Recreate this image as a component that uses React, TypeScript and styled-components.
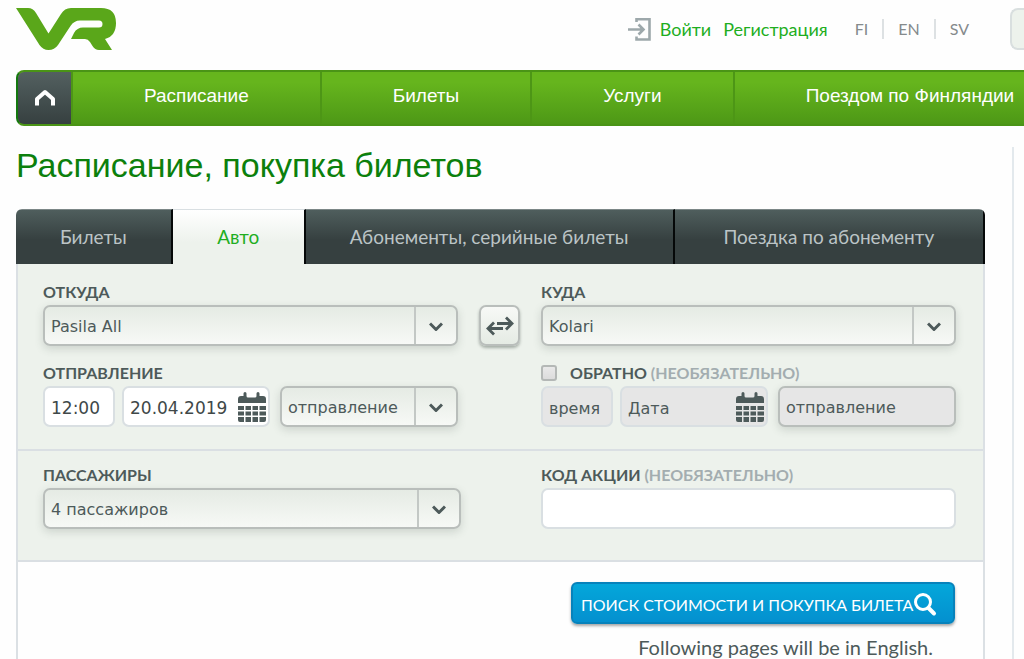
import React from 'react';
import styled, { createGlobalStyle, css } from 'styled-components';

const GlobalStyle = createGlobalStyle`
  *, *::before, *::after { box-sizing: border-box; }
  body {
    margin: 0;
    background: #fefefe;
    color: #4d5a5a;
    font-family: Lato, 'Liberation Sans', sans-serif;
    overflow-x: hidden;
  }
`;

const formFont = css`
  font-family: 'DejaVu Sans', sans-serif;
  font-size: 16px;
  line-height: 20px;
`;

const valueFont = css`
  ${formFont}
  font-size: 17px;
  color: #404848;
  &::placeholder { color: #4d5a5a; font-size: 16px; opacity: 1; }
`;

const Page = styled.div`
  display: flex;
  flex-direction: column;
  min-height: 100vh;
  padding-left: 16px;
  overflow: hidden;
`;

const Header = styled.header`
  display: flex;
  justify-content: space-between;
  align-items: flex-start;
  height: 70px;
  padding-top: 8px;
`;

const LogoLink = styled.a`
  display: block;
  line-height: 0;
`;

const Tools = styled.div`
  display: flex;
  align-items: center;
`;

const AccountLinks = styled.nav`
  display: flex;
  align-items: center;
  gap: 12px;
`;

const AccountLink = styled.a`
  display: flex;
  align-items: center;
  gap: 9px;
  color: #1fae1f;
  font-size: 18px;
  line-height: 24px;
  text-decoration: none;
`;

const Languages = styled.nav`
  display: flex;
  margin: 0 27px 0 13px;
`;

const LanguageLink = styled.a`
  padding: 0 14px;
  color: #858a8c;
  font-size: 16px;
  line-height: 20px;
  text-decoration: none;
  & + & { border-left: 2px solid #dde1e3; }
`;

const SiteSearch = styled.input`
  width: 14px;
  height: 42px;
  border: 2px solid #d9dfdf;
  border-right: 0;
  border-radius: 8px 0 0 8px;
  background: #edf2ec;
`;

const MainNav = styled.nav`
  display: flex;
  height: 56px;
  border: 2px solid #4a9416;
  border-right: 0;
  border-left-color: #14780f;
  border-radius: 8px 0 0 8px;
  background: linear-gradient(#66b51d 20%, #4d9816);
  overflow: hidden;
`;

const HomeLink = styled.a`
  display: flex;
  flex: none;
  align-items: center;
  justify-content: center;
  width: 53px;
  background: linear-gradient(#536060, #364040);
`;

const NavLink = styled.a`
  flex: none;
  padding: 0 71px;
  border-left: 2px solid #4d9616;
  color: #fff;
  font: 19px/48px 'Liberation Sans', sans-serif;
  text-decoration: none;
  white-space: nowrap;
`;

const Body = styled.div`
  display: flex;
  flex: 1;
  gap: 27px;
  padding-top: 21px;
`;

const Main = styled.main`
  display: flex;
  flex: 1;
  flex-direction: column;
  min-width: 0;
`;

const Aside = styled.aside`
  flex: none;
  width: 12px;
  border-left: 2px solid #e3e9ed;
`;

const Title = styled.h1`
  margin: 0 0 26px;
  color: #0c800c;
  font: 34px/36px 'Liberation Sans', sans-serif;
`;

const Tabs = styled.div`
  display: flex;
  height: 55px;
  border-radius: 6px 6px 0 0;
  overflow: hidden;
`;

const Tab = styled.button<{ $weight: number; $active?: boolean }>`
  flex: ${(p) => p.$weight} 1 0;
  min-width: 0;
  padding: 0;
  border: 0;
  border-top: 1px solid ${(p) => (p.$active ? '#d9dfe2' : '#7c8787')};
  border-right: 2px solid #050808;
  background: ${(p) => (p.$active ? 'linear-gradient(#fff, #edf2ec 60%)' : 'linear-gradient(#4f5e5d, #364040 55%)')};
  color: ${(p) => (p.$active ? '#1fae1f' : '#bcc4c6')};
  font: 19px/24px Lato, sans-serif;
  white-space: nowrap;
`;

const Form = styled.form`
  display: flex;
  flex: 1;
  flex-direction: column;
  border: solid #dbe0e4;
  border-width: 0 2px;
`;

const Section = styled.section`
  display: grid;
  grid-template-columns: 1fr 83px 1fr;
  row-gap: 16px;
  padding: 17px 27px 22px 25px;
  border-bottom: 2px solid #dadfe3;
  background: #edf2ec;
`;

const PassengerSection = styled(Section)`
  padding-top: 13px;
  padding-bottom: 31px;
`;

const Field = styled.div<{ $last?: boolean }>`
  display: flex;
  flex-direction: column;
  grid-column: ${(p) => (p.$last ? 3 : 1)};
  min-width: 0;
`;

const LabelRow = styled.div`
  display: flex;
  align-items: center;
  gap: 13px;
  height: 24px;
  padding-bottom: 2px;
`;

const Label = styled.label`
  color: #4d5a5a;
  font-size: 16px;
  font-weight: 700;
  line-height: 20px;
  text-transform: uppercase;
  white-space: nowrap;
`;

const Optional = styled.span`
  color: #a3adb0;
`;

const Checkbox = styled.input`
  appearance: none;
  width: 16px;
  height: 16px;
  margin: 0;
  border: 2px solid #b4b8b6;
  border-radius: 3px;
  background: linear-gradient(#e9e9e9, #dcdcdc);
`;

const FieldRow = styled.div`
  display: grid;
  grid-template-columns: 72px 148px 1fr;
  column-gap: 7px;
  & > :last-child { margin-left: 3px; }
`;

const controlBox = css`
  height: 41px;
  border: 2px solid #d9dfe2;
  border-radius: 7px;
  background: #fff;
  &:disabled { background: #e6e6e6; }
`;

const TextInput = styled.input`
  ${controlBox}
  ${valueFont}
  width: 100%;
  min-width: 0;
  padding: 2px 6px 0;
`;

const DateBox = styled.div<{ $disabled?: boolean }>`
  ${controlBox}
  display: flex;
  align-items: center;
  padding-right: 2px;
  ${(p) => p.$disabled && css`background: #e6e6e6;`}
`;

const DateInput = styled.input`
  ${valueFont}
  flex: 1;
  min-width: 0;
  padding: 2px 0 0 6px;
  border: 0;
  background: transparent;
`;

const SelectBox = styled.div<{ $disabled?: boolean; $wide?: boolean }>`
  display: flex;
  height: 41px;
  width: ${(p) => (p.$wide ? 'calc(100% + 3px)' : 'auto')};
  border: 2px solid #b9bebb;
  border-radius: 7px;
  background: ${(p) => (p.$disabled ? '#e6e6e6' : 'linear-gradient(#e5ebe4, #f7f9f6)')};
  box-shadow: 0 3px 8px rgba(60, 75, 65, 0.18);
`;

const Select = styled.select`
  ${formFont}
  appearance: none;
  flex: 1;
  min-width: 0;
  padding: 2px 0 0 6px;
  border: 0;
  background: transparent;
  color: #4d5a5a;
  opacity: 1;
`;

const SelectArrow = styled.span`
  display: flex;
  flex: none;
  align-items: center;
  justify-content: center;
  width: 42px;
  padding-top: 2px;
  border-left: 2px solid #c3c8c5;
  pointer-events: none;
`;

const SwapButton = styled.button`
  display: flex;
  grid-column: 2;
  align-self: end;
  justify-self: center;
  align-items: center;
  justify-content: center;
  width: 41px;
  height: 41px;
  padding: 0;
  border: 2px solid #b9bebb;
  border-radius: 7px;
  background: linear-gradient(#f7f9f6, #e5ebe4);
  box-shadow: 0 2px 3px rgba(60, 75, 65, 0.4);
`;

const Submit = styled.div`
  display: flex;
  flex-direction: column;
  align-items: flex-end;
  padding: 20px 28px 0;
`;

const SubmitButton = styled.button`
  display: flex;
  align-items: center;
  width: 384px;
  height: 42px;
  padding: 3px 8px 0;
  border: 2px solid #0782bb;
  border-radius: 6px;
  background: linear-gradient(#04a7da, #0490cf);
  box-shadow: 0 2px 3px rgba(0, 0, 0, 0.35);
  color: #fff;
  font: 16px/24px Lato, sans-serif;
  text-transform: uppercase;
  white-space: nowrap;
`;

const Note = styled.p`
  margin: 12px 22px 0 0;
  font-size: 20px;
  line-height: 22px;
`;

const Logo = () => (
  <svg width="100" height="42" viewBox="0 0 100 42" role="img" aria-label="VR">
    <path
      fill="#5aa71a"
      d="M0 0H12Q17 0 20 5L32.500 25.500L45 6Q48.500 0 55 0H85Q100 0 100 15Q100 28 89 31L96 42H83Q79 42 76.500 38L74 34Q72 31 69 31H55L58 25Q61 19.500 67 19.500H83Q86.500 19.500 86.500 16Q86.500 12.500 83 12.500H64Q58 12.500 54.500 18L42 37Q38.500 42 32.500 42Q27 42 23.500 37Z"
    />
  </svg>
);

const LoginIcon = () => (
  <svg width="23" height="24" viewBox="0 0 23 24" fill="none" stroke="#9da8ab" strokeWidth="2.600" aria-hidden="true">
    <path d="M8.500 5V2.300H21.500V22.500H8.500V19.500" />
    <path d="M0 12.500H15M10.500 7.500L15.500 12.500L10.500 17.500" />
  </svg>
);

const HomeIcon = () => (
  <svg width="20" height="18" viewBox="0 0 20 18" fill="none" stroke="#fff" strokeWidth="4" aria-hidden="true">
    <path d="M2 16.500V10L10 3L18 10V16.500" strokeLinejoin="round" />
  </svg>
);

const Chevron = () => (
  <SelectArrow>
    <svg width="14" height="10" viewBox="0 0 14 10" fill="none" stroke="#4d5a5a" strokeWidth="3" aria-hidden="true">
      <path d="M1 1.500L7 7.500L13 1.500" strokeLinejoin="round" />
    </svg>
  </SelectArrow>
);

const SwapIcon = () => (
  <svg width="28" height="20" viewBox="0 0 28 20" fill="none" stroke="#4d5a5a" strokeWidth="2.800" aria-hidden="true">
    <path d="M11 7.500H26M20 1.500L26 7.500L20 13.500M17 12.500H2M8 6.500L2 12.500L8 18.500" />
  </svg>
);

const CalendarIcon = () => (
  <svg width="28" height="30" viewBox="0 0 28 30" fill="#4d5a5a" aria-hidden="true">
    <path d="M0 11V7Q0 4 3 4H5.500V1.500Q5.500 0 7 0Q8.500 0 8.500 1.500V4Q8.500 5.500 10 5.500H17Q18.500 5.500 18.500 4V1.500Q18.500 0 20 0Q21.500 0 21.500 1.500V4H25Q28 4 28 7V11Z" />
    <path d="M0 14H6V18H0ZM7.500 14H13V18H7.500ZM14.500 14H20V18H14.500ZM21.500 14H28V18H21.500ZM0 19.500H6V23.500H0ZM7.500 19.500H13V23.500H7.500ZM14.500 19.500H20V23.500H14.500ZM21.500 19.500H28V23.500H21.500ZM0 25H6V30H2Q0 30 0 28ZM7.500 25H13V30H7.500ZM14.500 25H20V30H14.500ZM21.500 25H28V28Q28 30 26 30H21.500Z" />
  </svg>
);

const SearchGlyph = styled.svg`
  flex: none;
`;

const SearchIcon = () => (
  <SearchGlyph width="24" height="24" viewBox="0 0 24 24" fill="none" stroke="#fff" aria-hidden="true">
    <circle cx="10" cy="9" r="7.500" strokeWidth="3" />
    <path d="M15.500 15L21 20.500" strokeWidth="4" strokeLinecap="round" />
  </SearchGlyph>
);

const navItems = ['Расписание', 'Билеты', 'Услуги', 'Поездом по Финляндии'];

const tabs = [
  { name: 'Билеты', weight: 156 },
  { name: 'Авто', weight: 132, active: true },
  { name: 'Абонементы, серийные билеты', weight: 370 },
  { name: 'Поездка по абонементу', weight: 311 },
];

interface SelectFieldProps {
  id?: string;
  label?: string;
  value: string;
  disabled?: boolean;
  wide?: boolean;
}

const SelectField = ({ id, label, value, disabled, wide }: SelectFieldProps) => (
  <SelectBox $disabled={disabled} $wide={wide}>
    <Select id={id} aria-label={label} disabled={disabled}>
      <option>{value}</option>
    </Select>
    {!disabled && <Chevron />}
  </SelectBox>
);

export default function App() {
  return (
    <>
      <GlobalStyle />
      <Page>
        <Header>
          <LogoLink href="#"><Logo /></LogoLink>
          <Tools>
            <AccountLinks>
              <AccountLink href="#"><LoginIcon />Войти</AccountLink>
              <AccountLink href="#">Регистрация</AccountLink>
            </AccountLinks>
            <Languages>
              {['FI', 'EN', 'SV'].map((l) => <LanguageLink key={l} href="#">{l}</LanguageLink>)}
            </Languages>
            <SiteSearch type="search" aria-label="Поиск" />
          </Tools>
        </Header>
        <MainNav>
          <HomeLink href="#" aria-label="VR"><HomeIcon /></HomeLink>
          {navItems.map((n) => <NavLink key={n} href="#">{n}</NavLink>)}
        </MainNav>
        <Body>
          <Main>
            <Title>Расписание, покупка билетов</Title>
            <Tabs>
              {tabs.map((t) => (
                <Tab key={t.name} type="button" $weight={t.weight} $active={t.active}>{t.name}</Tab>
              ))}
            </Tabs>
            <Form>
              <Section>
                <Field>
                  <LabelRow><Label htmlFor="from">Откуда</Label></LabelRow>
                  <SelectField id="from" value="Pasila All" />
                </Field>
                <SwapButton type="button" aria-label="Откуда / Куда"><SwapIcon /></SwapButton>
                <Field $last>
                  <LabelRow><Label htmlFor="to">Куда</Label></LabelRow>
                  <SelectField id="to" value="Kolari" />
                </Field>
                <Field>
                  <LabelRow><Label htmlFor="time">Отправление</Label></LabelRow>
                  <FieldRow>
                    <TextInput id="time" defaultValue="12:00" />
                    <DateBox>
                      <DateInput aria-label="Дата" defaultValue="20.04.2019" />
                      <CalendarIcon />
                    </DateBox>
                    <SelectField label="Отправление" value="отправление" />
                  </FieldRow>
                </Field>
                <Field $last>
                  <LabelRow>
                    <Checkbox type="checkbox" id="return" />
                    <Label htmlFor="return">Обратно <Optional>(необязательно)</Optional></Label>
                  </LabelRow>
                  <FieldRow>
                    <TextInput aria-label="время" placeholder="время" disabled />
                    <DateBox $disabled>
                      <DateInput aria-label="Дата" placeholder="Дата" disabled />
                      <CalendarIcon />
                    </DateBox>
                    <SelectField label="Обратно" value="отправление" disabled />
                  </FieldRow>
                </Field>
              </Section>
              <PassengerSection>
                <Field>
                  <LabelRow><Label htmlFor="passengers">Пассажиры</Label></LabelRow>
                  <SelectField id="passengers" value="4 пассажиров" wide />
                </Field>
                <Field $last>
                  <LabelRow><Label htmlFor="code">Код акции <Optional>(необязательно)</Optional></Label></LabelRow>
                  <TextInput id="code" />
                </Field>
              </PassengerSection>
              <Submit>
                <SubmitButton type="submit">Поиск стоимости и покупка билета<SearchIcon /></SubmitButton>
                <Note>Following pages will be in English.</Note>
              </Submit>
            </Form>
          </Main>
          <Aside />
        </Body>
      </Page>
    </>
  );
}
